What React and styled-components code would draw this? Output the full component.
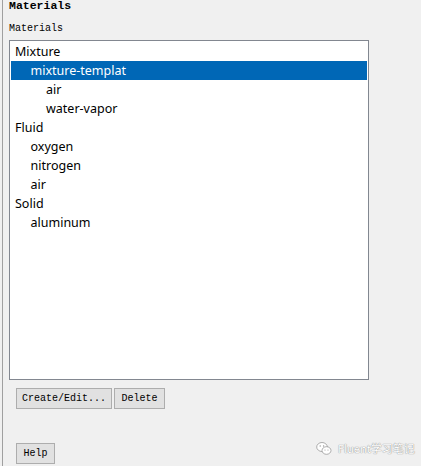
import React from "react";
import styled, { createGlobalStyle } from "styled-components";

const Global = createGlobalStyle`
  html, body { margin: 0; padding: 0; background: #f0f0f0; }
  body { width: 421px; height: 466px; overflow: hidden; }
`;

const Page = styled.div`
  position: relative;
  width: 421px;
  height: 466px;
  padding-left: 2px;
  box-sizing: border-box;
  background: #f0f0f0;
`;

const Panel = styled.div`
  height: 100%;
  border-left: 1px solid #a0a0a0;
  padding-left: 6px;
  display: flex;
  flex-direction: column;
  align-items: flex-start;
  font-family: "Liberation Mono", "DejaVu Sans Mono", monospace;
`;

const Title = styled.div`
  font-weight: bold;
  font-size: 11.5px;
  line-height: 11px;
  height: 11px;
  color: #000;
`;

const Label = styled.div`
  font-size: 10px;
  line-height: 12px;
  margin-top: 12px;
  color: #000;
`;

const ListBox = styled.div`
  margin-top: 5px;
  width: 360px;
  height: 340px;
  box-sizing: border-box;
  border: 1px solid #828790;
  background: #fff;
  padding: 1px;
  font-family: "Noto Sans", "Open Sans", sans-serif;
  font-size: 12.5px;
`;

const Row = styled.div`
  height: 19px;
  line-height: 19px;
  padding-left: ${(p) => 4 + p.$level * 15.5}px;
  background: ${(p) => (p.$selected ? "#0067b6" : "transparent")};
  color: ${(p) => (p.$selected ? "#fff" : "#000")};
  white-space: nowrap;
`;

const ButtonRow = styled.div`
  display: flex;
  gap: 2px;
  margin-top: 8px;
  padding-left: 7px;
`;

const Button = styled.button`
  height: 21px;
  width: ${(p) => p.$w}px;
  padding: 0;
  box-sizing: border-box;
  background: #e1e1e1;
  border: 1px solid #adadad;
  font-family: "Liberation Mono", "DejaVu Sans Mono", monospace;
  font-size: 10px;
  color: #000;
  border-radius: 0;
`;

const HelpRow = styled(ButtonRow)`
  margin-top: 34px;
`;

const Watermark = styled.div`
  position: absolute;
  left: 316px;
  top: 440px;
  display: flex;
  align-items: center;
  gap: 6px;
  font-family: "Noto Sans CJK SC", "Noto Sans", sans-serif;
  font-size: 11px;
  color: #fff;
  text-shadow: 0 0 1px #888, 0 0 1px #999;
`;

const items = [
  { t: "Mixture", l: 0 },
  { t: "mixture-templat", l: 1, s: true },
  { t: "air", l: 2 },
  { t: "water-vapor", l: 2 },
  { t: "Fluid", l: 0 },
  { t: "oxygen", l: 1 },
  { t: "nitrogen", l: 1 },
  { t: "air", l: 1 },
  { t: "Solid", l: 0 },
  { t: "aluminum", l: 1 },
];

const WeChatIcon = () => (
  <svg width="16" height="15" viewBox="0 0 16 15">
    <g fill="#fff" stroke="#999" strokeWidth="0.8">
      <ellipse cx="6" cy="6" rx="5.3" ry="4.5" />
      <ellipse cx="10.5" cy="9.5" rx="4.5" ry="3.8" />
    </g>
    <g fill="#999">
      <circle cx="4.2" cy="5" r="0.7" />
      <circle cx="7.6" cy="5" r="0.7" />
      <circle cx="9" cy="9" r="0.6" />
      <circle cx="12" cy="9" r="0.6" />
    </g>
  </svg>
);

export default function App() {
  return (
    <Page>
      <Global />
      <Panel>
        <Title>Materials</Title>
        <Label>Materials</Label>
        <ListBox>
          {items.map((it, i) => (
            <Row key={i} $level={it.l} $selected={it.s}>
              {it.t}
            </Row>
          ))}
        </ListBox>
        <ButtonRow>
          <Button $w={96}>Create/Edit...</Button>
          <Button $w={51}>Delete</Button>
        </ButtonRow>
        <HelpRow>
          <Button $w={39}>Help</Button>
        </HelpRow>
      </Panel>
      <Watermark>
        <WeChatIcon />
        <span>Fluent学习笔记</span>
      </Watermark>
    </Page>
  );
}
